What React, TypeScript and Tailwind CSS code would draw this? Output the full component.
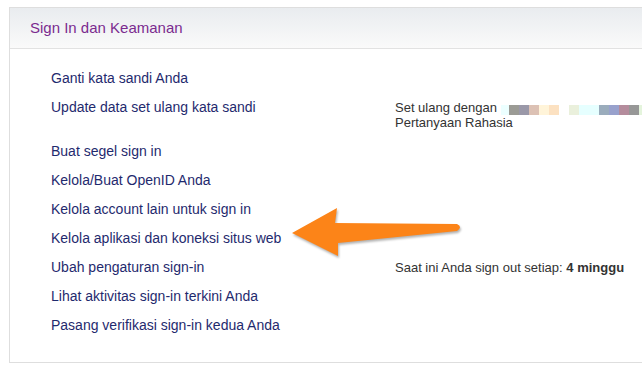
export default function App() {
  const blurBlocks = [
    "#9b9b95",
    "#9a98a8",
    "#dcc1b4",
    "#fff4d9",
    "#fce1c1",
    "#ffffff",
    "#eaf0dc",
    "#e6ffff",
    "#e6ffff",
    "#9aacbc",
    "#98a1cc",
    "#b48c9c",
    "#979797",
    "#e4f4dc",
  ];

  const rows: { label: string; right?: React.ReactNode }[] = [
    { label: "Ganti kata sandi Anda" },
    {
      label: "Update data set ulang kata sandi",
      right: (
        <>
          Set ulang dengan{" "}
          <span className="inline-block align-[-3px]">
            <span className="flex h-[10px]">
              <span className="w-[8px] bg-[#ecffff]" />
              {blurBlocks.map((c, i) => (
                <span key={i} className="w-[10px]" style={{ backgroundColor: c }} />
              ))}
            </span>
          </span>
          <br />
          Pertanyaan Rahasia
        </>
      ),
    },
    { label: "Buat segel sign in" },
    { label: "Kelola/Buat OpenID Anda" },
    { label: "Kelola account lain untuk sign in" },
    { label: "Kelola aplikasi dan koneksi situs web" },
    {
      label: "Ubah pengaturan sign-in",
      right: (
        <>
          Saat ini Anda sign out setiap: <b className="font-bold">4 minggu</b>
        </>
      ),
    },
    { label: "Lihat aktivitas sign-in terkini Anda" },
    { label: "Pasang verifikasi sign-in kedua Anda" },
  ];

  return (
    <div className="relative w-[642px] h-[374px] overflow-hidden bg-white font-['Liberation_Sans',Arial,sans-serif]">
      <div className="ml-[9px] mt-[7px] w-[660px] border border-[#dedede]">
        <div className="h-[41px] flex items-center pl-[20px] border-b border-[#e2e2e2] bg-gradient-to-b from-[#e9ecef] to-[#fafafa]">
          <h2 className="text-[15px] text-[#7b2b8f]">Sign In dan Keamanan</h2>
        </div>
        <div className="pt-[15px] pb-[22px]">
          {rows.map((r) => (
            <div key={r.label} className="flex py-[7px] leading-[15px]">
              <a className="w-[385px] pl-[41px] text-[14px] text-[#1f2a6e] cursor-pointer">
                {r.label}
              </a>
              {r.right && <div className="text-[13px] text-[#333]">{r.right}</div>}
            </div>
          ))}
        </div>
      </div>

      <svg
        className="absolute left-0 top-0 drop-shadow-[1px_2px_1px_rgba(0,0,0,0.3)]"
        width="642"
        height="374"
        viewBox="0 0 642 374"
      >
        <path
          d="M292 233 L337 208 L335 223 L457 224 Q463 227 457 231 L338 243 L338 256 Z"
          fill="#fc8418"
        />
      </svg>
    </div>
  );
}
